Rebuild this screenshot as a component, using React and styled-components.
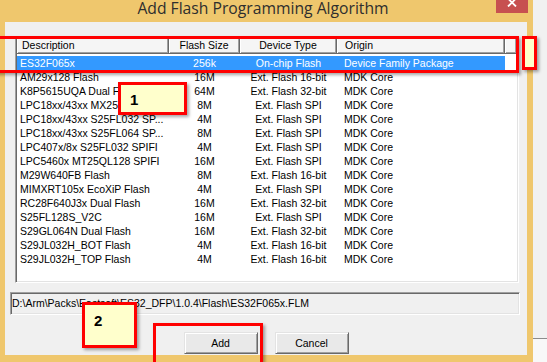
import React from "react"
import styled, { createGlobalStyle } from "styled-components"

const GlobalStyle = createGlobalStyle`
  html, body {
    margin: 0;
    padding: 0;
    background: #fff;
    overflow: hidden;
  }
  #root {
    width: 547px;
    height: 362px;
  }
`

const algorithms = [
  { desc: "ES32F065x", size: "256k", type: "On-chip Flash", origin: "Device Family Package", selected: true },
  { desc: "AM29x128 Flash", size: "16M", type: "Ext. Flash 16-bit", origin: "MDK Core" },
  { desc: "K8P5615UQA Dual Flash", size: "64M", type: "Ext. Flash 32-bit", origin: "MDK Core" },
  { desc: "LPC18xx/43xx MX25L80...", size: "8M", type: "Ext. Flash SPI", origin: "MDK Core" },
  { desc: "LPC18xx/43xx S25FL032 SP...", size: "4M", type: "Ext. Flash SPI", origin: "MDK Core" },
  { desc: "LPC18xx/43xx S25FL064 SP...", size: "8M", type: "Ext. Flash SPI", origin: "MDK Core" },
  { desc: "LPC407x/8x S25FL032 SPIFI", size: "4M", type: "Ext. Flash SPI", origin: "MDK Core" },
  { desc: "LPC5460x MT25QL128 SPIFI", size: "16M", type: "Ext. Flash SPI", origin: "MDK Core" },
  { desc: "M29W640FB Flash", size: "8M", type: "Ext. Flash 16-bit", origin: "MDK Core" },
  { desc: "MIMXRT105x EcoXiP Flash", size: "4M", type: "Ext. Flash SPI", origin: "MDK Core" },
  { desc: "RC28F640J3x Dual Flash", size: "16M", type: "Ext. Flash 32-bit", origin: "MDK Core" },
  { desc: "S25FL128S_V2C", size: "16M", type: "Ext. Flash SPI", origin: "MDK Core" },
  { desc: "S29GL064N Dual Flash", size: "16M", type: "Ext. Flash 32-bit", origin: "MDK Core" },
  { desc: "S29JL032H_BOT Flash", size: "4M", type: "Ext. Flash 16-bit", origin: "MDK Core" },
  { desc: "S29JL032H_TOP Flash", size: "4M", type: "Ext. Flash 16-bit", origin: "MDK Core" },
]

const Stage = styled.div`
  position: relative;
  display: flex;
  width: 547px;
  height: 362px;
  overflow: hidden;
  font-family: "Liberation Sans", Arial, sans-serif;
  font-size: 10.5px;
  color: #000;
`

const Window = styled.div`
  width: 533px;
  flex: none;
  display: flex;
  flex-direction: column;
  background: #efc76d;
`

const TitleBar = styled.div`
  height: 22px;
  flex: none;
  display: flex;
  align-items: flex-start;
`

const Title = styled.div`
  flex: 1;
  padding-left: 30px;
  text-align: center;
  font-family: "Open Sans", "Noto Sans", sans-serif;
  font-size: 15.7px;
  line-height: 16px;
  color: #2e2e2e;
`

const CloseButton = styled.div`
  width: 32px;
  height: 21px;
  margin-top: -8px;
  margin-right: 5px;
  background: #c75050;
  display: flex;
  align-items: center;
  justify-content: center;
`

const Client = styled.div`
  flex: 1;
  margin: 0 6px 7px 5px;
  background: #f0f0f0;
  display: flex;
  flex-direction: column;
`

const ListView = styled.div`
  margin: 14px 0 0 10px;
  width: 504px;
  height: 247px;
  box-sizing: border-box;
  padding: 1px;
  background: #fff;
  border: 1px solid;
  border-color: #a0a0a0 #fff #fff #a0a0a0;
  box-shadow: inset 1px 1px #696969, inset -1px -1px #e3e3e3;
`

const columns = "152px 71px 97px 168px"

const HeaderRow = styled.div`
  display: grid;
  grid-template-columns: ${columns} 1fr;
  height: 16px;
`

const HeaderCell = styled.div`
  box-sizing: border-box;
  line-height: 15px;
  background: #f5f5f5;
  border-right: 1px solid #696969;
  border-bottom: 1px solid #696969;
  box-shadow: inset 1px 1px #fff, inset -1px -1px #a0a0a0;
  text-align: ${p => p.$align || "left"};
  padding-left: ${p => p.$pad || 0}px;
  white-space: nowrap;
  overflow: hidden;
`

const Rows = styled.div`
  padding-top: 2px;
`

const Row = styled.div`
  display: grid;
  grid-template-columns: ${columns};
  width: 488px;
  height: 14px;
  line-height: 14px;
  background: ${p => (p.$selected ? "#3399ff" : "transparent")};
  color: ${p => (p.$selected ? "#fff" : "#000")};
`

const Cell = styled.div`
  text-align: ${p => p.$align || "left"};
  padding-left: ${p => p.$pad || 0}px;
  white-space: nowrap;
  overflow: hidden;
`

const PathField = styled.div`
  margin: 9px 0 0 5px;
  width: 510px;
  height: 23px;
  box-sizing: border-box;
  padding-left: 1px;
  line-height: 21px;
  background: #f0f0f0;
  border: 1px solid;
  border-color: #a0a0a0 #fff #fff #a0a0a0;
  box-shadow: inset 1px 1px #696969, inset -1px -1px #e3e3e3;
  white-space: nowrap;
  overflow: hidden;
`

const ButtonRow = styled.div`
  margin-top: 17px;
  display: flex;
  justify-content: center;
  gap: 17px;
`

const Button = styled.div`
  width: 74px;
  height: 22px;
  box-sizing: border-box;
  line-height: 20px;
  text-align: center;
  background: #e9e9e9;
  border: 1px solid;
  border-color: #e3e3e3 #696969 #696969 #e3e3e3;
  box-shadow: inset 1px 1px #fff, inset -1px -1px #a0a0a0;
`

const Backdrop = styled.div`
  flex: 1;
  display: flex;
  flex-direction: column;
  background: #f8f8f8;
`

const BackdropPane = styled.div`
  height: 338px;
  flex: none;
  background: #f1f1f1;
  border-bottom: 1px solid #8c8c8c;
`

const Highlight = styled.div`
  position: absolute;
  left: ${p => p.$x}px;
  top: ${p => p.$y}px;
  width: ${p => p.$w}px;
  height: ${p => p.$h}px;
  box-sizing: border-box;
  border: 3px solid #ff0000;
  box-shadow: 2px 2px 3px rgba(0, 0, 0, 0.35);
`

const Note = styled(Highlight)`
  background: #ffffcc;
  padding: ${p => p.$padTop || 0}px 0 0 ${p => p.$padLeft || 0}px;
  font-weight: bold;
  font-size: 15px;
  line-height: 15px;
`

const App = () => {
  return (
    <>
      <GlobalStyle />
      <Stage>
        <Window>
          <TitleBar>
            <Title>Add Flash Programming Algorithm</Title>
            <CloseButton>
              <svg width="10" height="9" viewBox="0 0 10 9">
                <path d="M1 0.5 L9 8.5 M9 0.5 L1 8.5" stroke="#fff" strokeWidth="1.8" />
              </svg>
            </CloseButton>
          </TitleBar>
          <Client>
            <ListView>
              <HeaderRow>
                <HeaderCell $pad={5}>Description</HeaderCell>
                <HeaderCell $align="center">Flash Size</HeaderCell>
                <HeaderCell $align="center">Device Type</HeaderCell>
                <HeaderCell $pad={8}>Origin</HeaderCell>
                <HeaderCell />
              </HeaderRow>
              <Rows>
                {algorithms.map((a, i) => (
                  <Row key={i} $selected={a.selected}>
                    <Cell $pad={3}>{a.desc}</Cell>
                    <Cell $align="center">{a.size}</Cell>
                    <Cell $align="center">{a.type}</Cell>
                    <Cell $pad={7}>{a.origin}</Cell>
                  </Row>
                ))}
              </Rows>
            </ListView>
            <PathField>D:\Arm\Packs\Eastsoft\ES32_DFP\1.0.4\Flash\ES32F065x.FLM</PathField>
            <ButtonRow>
              <Button>Add</Button>
              <Button>Cancel</Button>
            </ButtonRow>
          </Client>
        </Window>
        <Backdrop>
          <BackdropPane />
        </Backdrop>

        {/* annotations drawn over the dialog */}
        <Highlight $x={-10} $y={36} $w={529} $h={37} />
        <Note $x={522} $y={36} $w={15} $h={34} />
        <Note $x={118} $y={82} $w={69} $h={33} $padTop={7} $padLeft={9}>1</Note>
        <Note $x={82} $y={302} $w={55} $h={46} $padTop={8} $padLeft={9}>2</Note>
        <Highlight $x={153} $y={323} $w={110} $h={50} />
      </Stage>
    </>
  )
}

export default App
